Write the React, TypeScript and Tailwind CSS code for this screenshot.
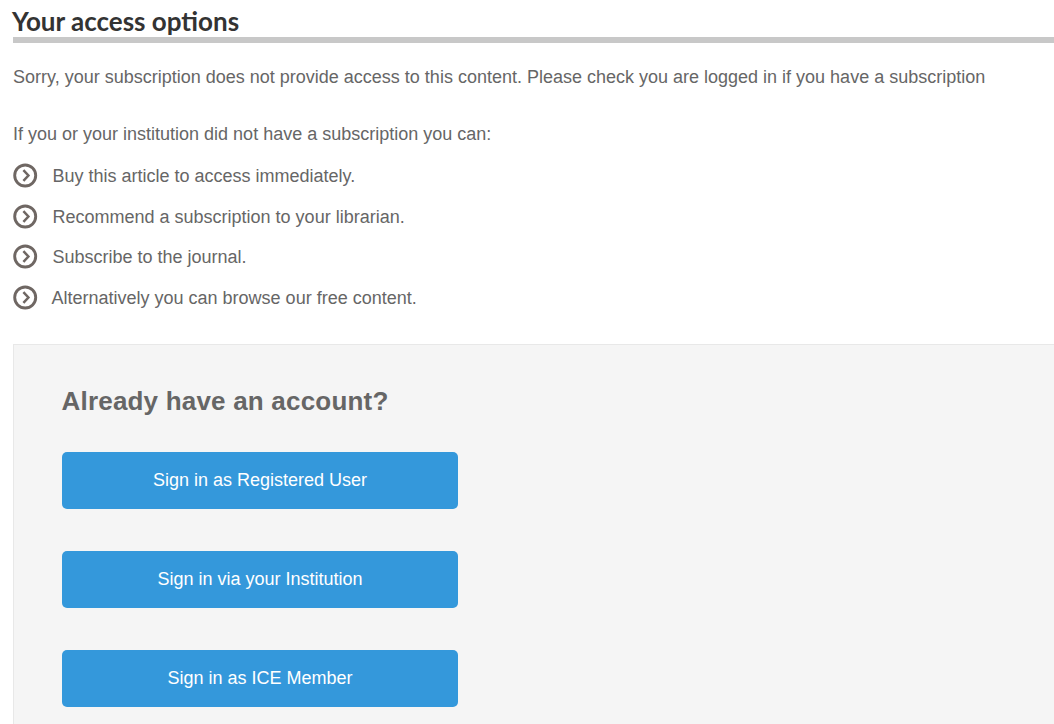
const options = [
  { text: "Buy this article to access immediately.", gap: "gap-[14.5px]", height: "h-[41px]" },
  { text: "Recommend a subscription to your librarian.", gap: "gap-[14.5px]", height: "h-[40px]" },
  { text: "Subscribe to the journal.", gap: "gap-[14.5px]", height: "h-[41px]" },
  { text: "Alternatively you can browse our free content.", gap: "gap-[13.5px]", height: "h-[41px]" },
];

const ChevronCircle = () => (
  <svg width="25" height="25" viewBox="0 0 25 25" fill="none" className="mt-[-2px] shrink-0">
    <circle cx="12.2" cy="12.5" r="10.5" stroke="#6f6763" strokeWidth="2.9" />
    <path d="M10.4 7.2l5 5.3-5 5.3" stroke="#6f6763" strokeWidth="2.5" />
  </svg>
);

const SignInButton = ({ label }: { label: string }) => (
  <button className="flex h-[57px] w-[396px] items-center justify-center rounded-[5px] bg-[#3498db] text-[18px] text-white">
    {label}
  </button>
);

export default function App() {
  return (
    <div className="h-[724px] w-[1054px] overflow-hidden bg-white pl-[13px] font-['Liberation_Sans',Arial,sans-serif] text-[#666]">
      <h2 className="-ml-[1px] h-[37px] pt-[4px] font-['Lato',sans-serif] text-[26px] leading-[34px] font-bold text-[#333]">
        Your access options
      </h2>
      <div className="h-[6px] bg-[#c8c8c8]" />
      <p className="mt-[22px] text-[18px] leading-[24px]">
        Sorry, your subscription does not provide access to this content. Please check you are logged in if you have a subscription
      </p>
      <p className="mt-[33px] text-[18px] leading-[24px]">
        If you or your institution did not have a subscription you can:
      </p>
      <ul className="mt-[10px] text-[18px]">
        {options.map((o) => (
          <li key={o.text} className={`flex items-center ${o.gap} ${o.height}`}>
            <ChevronCircle />
            <span>{o.text}</span>
          </li>
        ))}
      </ul>
      <div className="mt-[25px] h-[400px] border-t border-l border-[#e8e8e8] bg-[#f5f5f5] pt-[40px] pl-[47.5px]">
        <h3 className="text-[26px] leading-[32px] font-bold tracking-[0.2px]">Already have an account?</h3>
        <div className="mt-[35px] ml-[0.5px] flex flex-col gap-[42px]">
          <SignInButton label="Sign in as Registered User" />
          <SignInButton label="Sign in via your Institution" />
          <SignInButton label="Sign in as ICE Member" />
        </div>
      </div>
    </div>
  );
}
